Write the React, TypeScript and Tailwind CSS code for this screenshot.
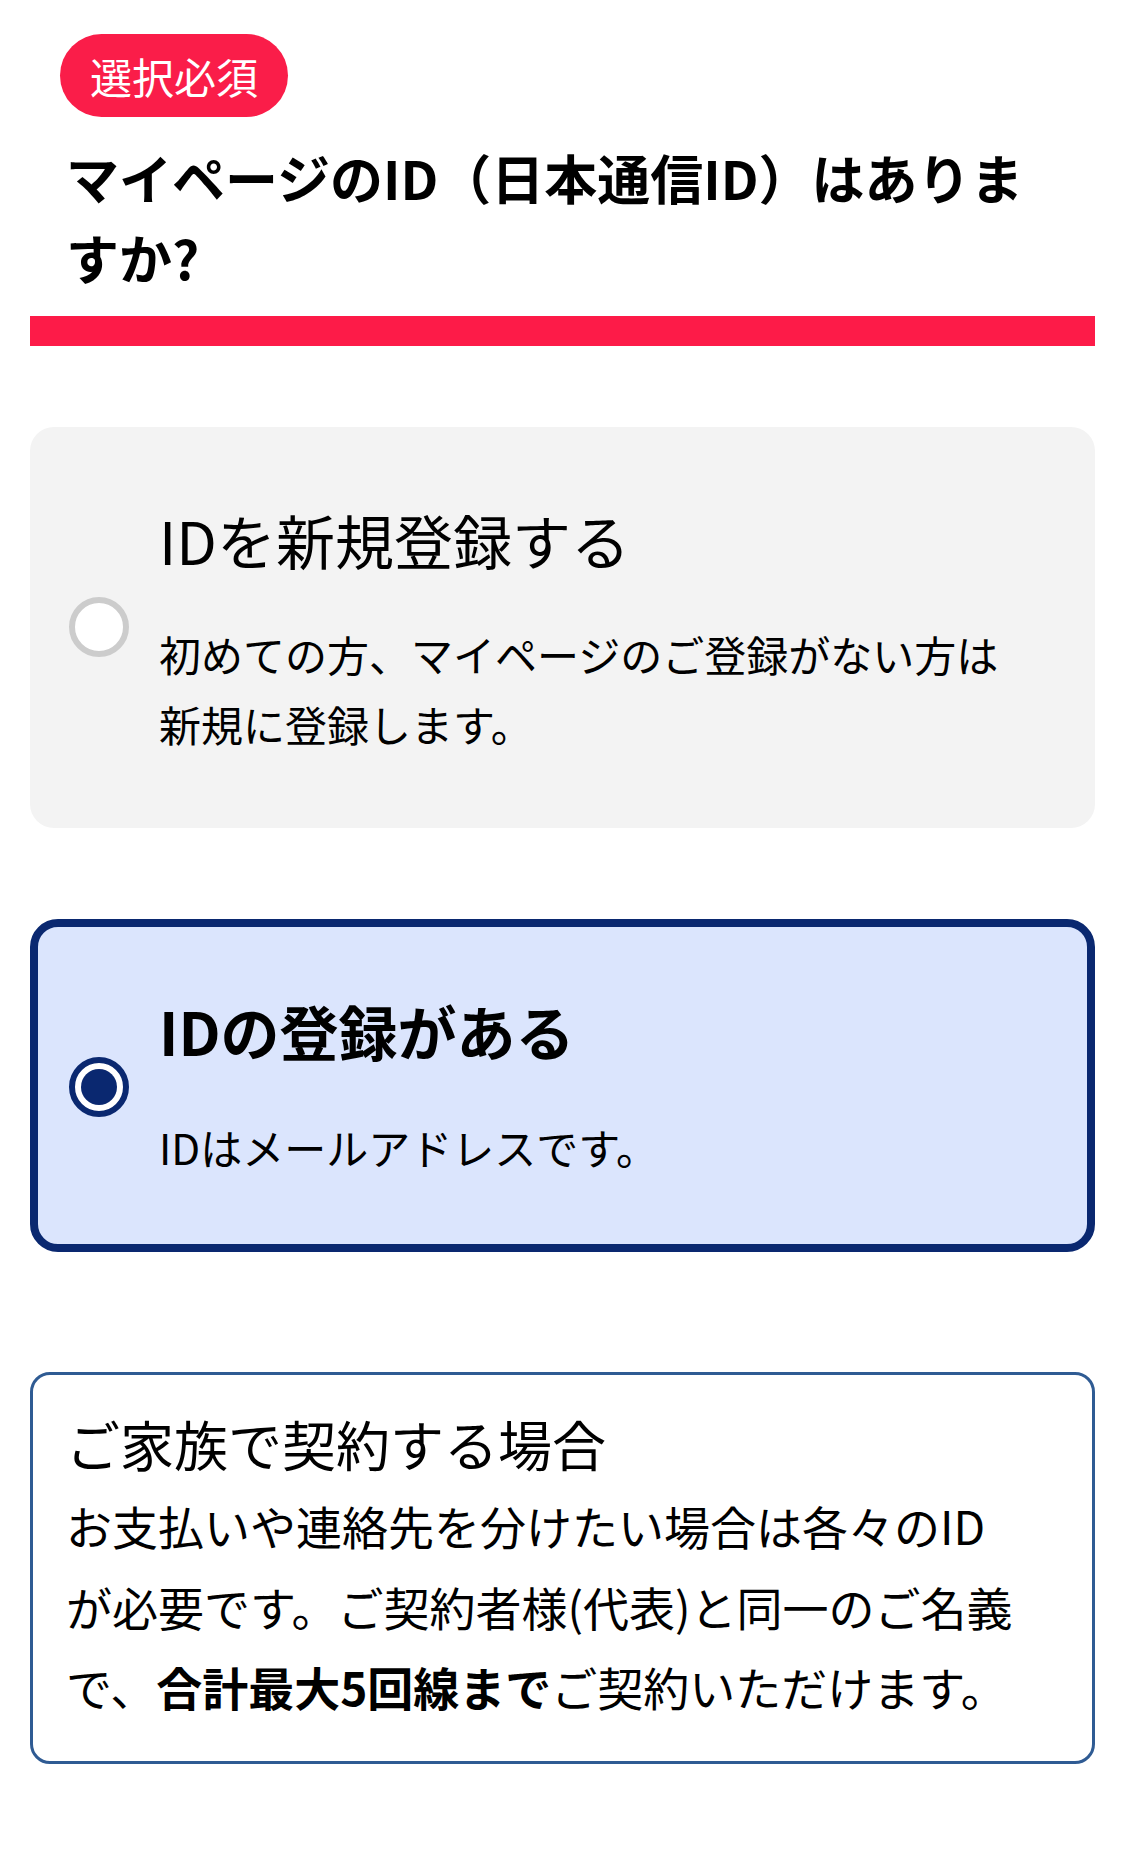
const jp = "font-['Noto_Sans_CJK_JP','Noto_Sans',sans-serif]";

function Radio({ checked }: { checked?: boolean }) {
  if (checked) {
    return (
      <div className="shrink-0 w-[60px] h-[60px] rounded-full border-[6px] border-[#0a2870] bg-white flex items-center justify-center">
        <div className="w-[36px] h-[36px] rounded-full bg-[#0a2870]" />
      </div>
    );
  }
  return (
    <div className="shrink-0 w-[60px] h-[60px] rounded-full border-[6px] border-[#cccccc] bg-white mb-[5px]" />
  );
}

export default function App() {
  return (
    <div className={`min-h-[1876px] bg-white text-black ${jp}`}>
      <div className="px-[30px] pt-[34px]">
        {/* Question header */}
        <div className="ml-[30px] inline-flex h-[83px] items-center rounded-full bg-[#fa1d49] px-[30px] text-[42px] text-white">
          選択必須
        </div>
        <h1 className="mt-[20px] pl-[36px] pr-[54px] text-[53px] font-bold leading-[80px]">
          マイページのID（日本通信ID）はありますか?
        </h1>
        <div className="mt-[19px] h-[30px] bg-[#fd1b48]" />

        {/* Option: new */}
        <div className="mt-[81px] flex items-center gap-[30px] rounded-[24px] bg-[#f3f3f3] pl-[39px] pr-[76px] pt-[73px] pb-[69px]">
          <Radio />
          <div className="flex-1">
            <p className="text-[59px] leading-[80px]">IDを新規登録する</p>
            <p className="mt-[39px] text-[42px] leading-[70px]">
              初めての方、マイページのご登録がない方は新規に登録します。
            </p>
          </div>
        </div>

        {/* Option: existing (selected) */}
        <div className="mt-[91px] flex items-center gap-[30px] rounded-[28px] border-[8px] border-[#0a2870] bg-[#dbe5fd] pl-[31px] pr-[68px] pt-[64px] pb-[62px]">
          <Radio checked />
          <div className="flex-1">
            <p className="text-[59px] font-bold leading-[80px]">IDの登録がある</p>
            <p className="mt-[41px] text-[42px] leading-[70px]">IDはメールアドレスです。</p>
          </div>
        </div>

        {/* Family note */}
        <div className="mt-[120px] rounded-[20px] border-[3px] border-[#2f5b93] pl-[33px] pr-[71px] pt-[28px] pb-[34px]">
          <p className="text-[54px] leading-[82px]">ご家族で契約する場合</p>
          <p className="text-[46px] leading-[80.5px]">
            お支払いや連絡先を分けたい場合は各々のIDが必要です。ご契約者様(代表)と同一のご名義で、
            <span className="font-bold">合計最大5回線まで</span>
            ご契約いただけます。
          </p>
        </div>
      </div>
    </div>
  );
}
